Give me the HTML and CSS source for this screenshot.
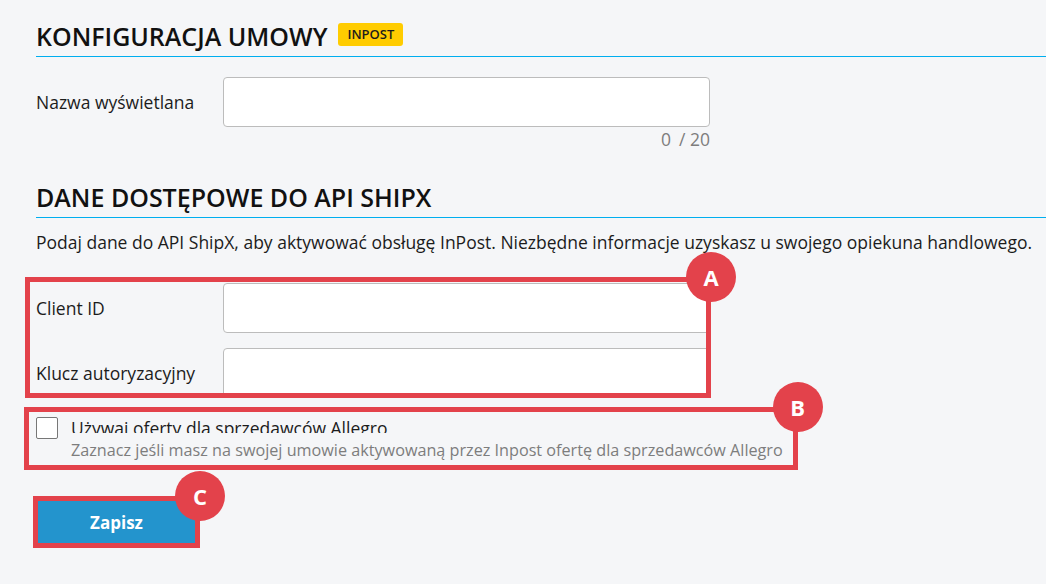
FILE: index.html
```html
<!DOCTYPE html>
<html lang="pl">
<head>
<meta charset="utf-8">
<title>Konfiguracja umowy InPost</title>
<link rel="stylesheet" href="styles.css">
</head>
<body>
<main class="page">
  <section class="section">
    <h2 class="section-title">KONFIGURACJA UMOWY <span class="badge">INPOST</span></h2>
    <div class="field field-first">
      <label class="field-label" for="name">Nazwa wyświetlana</label>
      <div class="field-control">
        <input class="text-input" id="name" type="text">
        <div class="counter">0<span class="counter-max">/ 20</span></div>
      </div>
    </div>
  </section>

  <section class="section section-api">
    <h2 class="section-title">DANE DOSTĘPOWE DO API SHIPX</h2>
    <p class="section-desc">Podaj dane do API ShipX, aby aktywować obsługę InPost. Niezbędne informacje uzyskasz u swojego opiekuna handlowego.</p>

    <div class="annotated annotated-a">
      <div class="field">
        <label class="field-label" for="client">Client ID</label>
        <div class="field-control"><input class="text-input" id="client" type="text"></div>
      </div>
      <div class="field field-next">
        <label class="field-label" for="key">Klucz autoryzacyjny</label>
        <div class="field-control"><input class="text-input" id="key" type="text"></div>
      </div>
      <span class="mark mark-a"><span class="mark-badge">A</span></span>
    </div>

    <div class="annotated annotated-b">
      <label class="checkbox-row">
        <span class="checkbox"></span>
        <span class="checkbox-text">
          <span class="checkbox-title">Używaj oferty dla sprzedawców Allegro</span>
          <span class="checkbox-hint">Zaznacz jeśli masz na swojej umowie aktywowaną przez Inpost ofertę dla sprzedawców Allegro</span>
        </span>
      </label>
      <span class="mark mark-b"><span class="mark-badge">B</span></span>
    </div>

    <div class="actions">
      <div class="annotated annotated-c">
        <button class="btn-save" type="button">Zapisz</button>
        <span class="mark mark-c"><span class="mark-badge">C</span></span>
      </div>
    </div>
  </section>
</main>
</body>
</html>
```

FILE: styles.css
```css
* { box-sizing: border-box; }

html, body {
  margin: 0;
  padding: 0;
  background: #f5f6f8;
}

body {
  font-family: "Open Sans", "Noto Sans", "Liberation Sans", sans-serif;
  font-size: 17.5px;
  color: #1c1c1c;
  width: 1046px;
  height: 584px;
  overflow: hidden;
}

.page {
  padding: 20px 0 0 36px;
}

.section-title {
  display: flex;
  align-items: center;
  margin: 0;
  font-size: 25px;
  font-weight: 600;
  line-height: 32px;
  color: #111;
  padding-bottom: 4px;
  border-bottom: 1px solid #00aeef;
}

.badge {
  display: inline-block;
  margin-left: 11px;
  margin-bottom: 3px;
  padding: 0 9px;
  height: 23px;
  line-height: 23px;
  border-radius: 3px;
  background: #ffcc00;
  color: #1c1c1c;
  font-size: 13px;
  font-weight: 600;
}

.field {
  display: grid;
  grid-template-columns: 187px 487px;
}

.field-first { margin-top: 20px; }
.field-next { margin-top: 15px; }

.field-label {
  display: flex;
  align-items: center;
  height: 50px;
  line-height: 22px;
}

.text-input {
  display: block;
  width: 487px;
  height: 50px;
  margin: 0;
  border: 1px solid #bcbcbc;
  border-radius: 4px;
  background: #fff;
  font: inherit;
  padding: 0 12px;
}

.counter {
  margin-top: 1px;
  text-align: right;
  line-height: 22px;
  color: #7d7d7d;
}

.counter-max {
  margin-left: 8px;
}

.section-api { margin-top: 31px; }

.section-desc {
  margin: 13px 0 0;
  line-height: 22px;
}

.annotated {
  position: relative;
  width: fit-content;
}

.annotated-a { margin-top: 30px; }
.annotated-b { margin-top: 19px; }
.annotated-c { margin-left: 2px; }

.mark {
  position: absolute;
  border: 5px solid #e3424b;
  pointer-events: none;
}

.mark-a { top: -6px; left: -11px; right: -1px; bottom: 0; }
.mark-b { top: -10px; left: -12px; right: -15px; bottom: -9px; }
.mark-c { top: -5px; left: -5px; right: -5px; bottom: -5px; }

.mark-badge {
  position: absolute;
  top: -30px;
  right: -30px;
  width: 50px;
  height: 50px;
  border-radius: 50%;
  background: #e3424b;
  color: #fff;
  font-size: 22px;
  font-weight: 700;
  line-height: 50px;
  text-align: center;
}

.checkbox-row {
  display: flex;
  align-items: flex-start;
  gap: 13px;
}

.checkbox {
  flex: none;
  width: 22px;
  height: 22px;
  border: 1px solid #777;
  border-radius: 2px;
  background: #fff;
}

.checkbox-text {
  display: flex;
  flex-direction: column;
  line-height: 22px;
}

.checkbox-title {
  clip-path: inset(0 0 6px 0);
}

.checkbox-hint {
  font-size: 16.2px;
  color: #7d7d7d;
}

.actions { margin-top: 40px; }

.btn-save {
  display: block;
  width: 157px;
  height: 42px;
  margin: 0;
  border: 0;
  border-radius: 0;
  background: #2394cd;
  color: #fff;
  font: inherit;
  font-weight: 700;
  font-size: 17px;
}
```
